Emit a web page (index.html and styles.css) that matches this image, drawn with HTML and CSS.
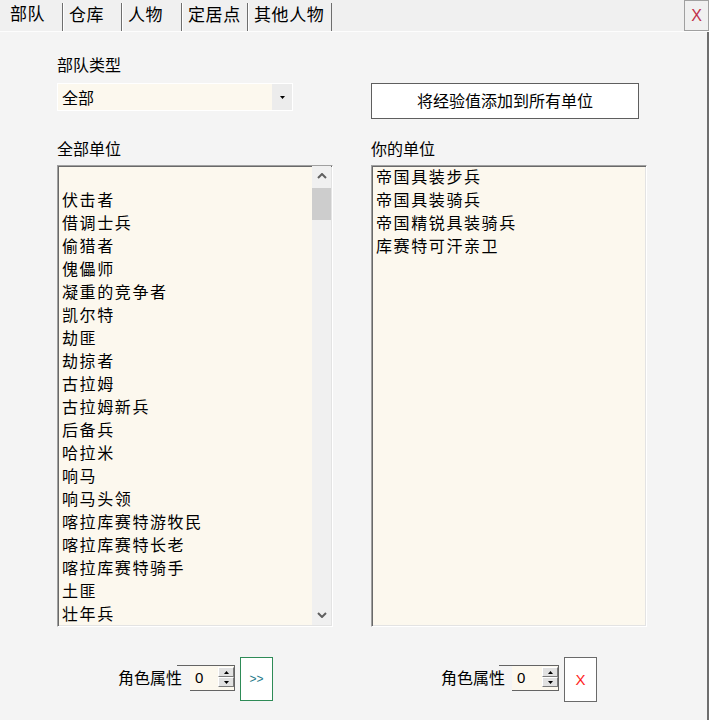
FILE: index.html
```html
<!DOCTYPE html>
<html lang="zh-CN">
<head>
<meta charset="utf-8">
<title>部队</title>
<link rel="stylesheet" href="styles.css">
</head>
<body>
<div class="window">
  <div class="tabbar">
    <div class="tabs">
      <div class="tab active">部队</div>
      <div class="tab">仓库</div>
      <div class="tab">人物</div>
      <div class="tab">定居点</div>
      <div class="tab">其他人物</div>
    </div>
    <div class="close">X</div>
  </div>
  <div class="panel">
    <div class="grid">
      <div class="label">部队类型</div>
      <div></div>

      <div class="select">
        <span class="select-text">全部</span>
        <span class="select-btn"><svg width="5" height="3" viewBox="0 0 5 3"><polygon points="0,0 5,0 2.5,3" fill="#000"/></svg></span>
      </div>
      <button class="wide-btn">将经验值添加到所有单位</button>

      <div class="label list-label">全部单位</div>
      <div class="label list-label">你的单位</div>

      <div class="listbox">
        <div class="items">
          <div class="item">&nbsp;</div>
          <div class="item">伏击者</div>
          <div class="item">借调士兵</div>
          <div class="item">偷猎者</div>
          <div class="item">傀儡师</div>
          <div class="item">凝重的竞争者</div>
          <div class="item">凯尔特</div>
          <div class="item">劫匪</div>
          <div class="item">劫掠者</div>
          <div class="item">古拉姆</div>
          <div class="item">古拉姆新兵</div>
          <div class="item">后备兵</div>
          <div class="item">哈拉米</div>
          <div class="item">响马</div>
          <div class="item">响马头领</div>
          <div class="item">喀拉库赛特游牧民</div>
          <div class="item">喀拉库赛特长老</div>
          <div class="item">喀拉库赛特骑手</div>
          <div class="item">土匪</div>
          <div class="item">壮年兵</div>
        </div>
        <div class="scrollbar">
          <div class="sb-arrow"><svg width="10" height="6" viewBox="0 0 10 6"><polyline points="1,5 5,1 9,5" fill="none" stroke="#606060" stroke-width="2"/></svg></div>
          <div class="sb-thumb"></div>
          <div class="sb-track"></div>
          <div class="sb-arrow"><svg width="10" height="6" viewBox="0 0 10 6"><polyline points="1,1 5,5 9,1" fill="none" stroke="#606060" stroke-width="2"/></svg></div>
        </div>
      </div>
      <div class="listbox">
        <div class="items">
          <div class="item">帝国具装步兵</div>
          <div class="item">帝国具装骑兵</div>
          <div class="item">帝国精锐具装骑兵</div>
          <div class="item">库赛特可汗亲卫</div>
        </div>
      </div>

      <div class="attr">
        <div class="attr-label">角色属性</div>
        <div class="spin">
          <div class="spin-gap"></div>
          <div class="spin-field">
            <div class="spin-value">0</div>
            <div class="spin-btns">
              <div class="spin-btn"><svg width="5" height="3" viewBox="0 0 5 3"><polygon points="0,3 5,3 2.5,0" fill="#000"/></svg></div>
              <div class="spin-btn"><svg width="5" height="3" viewBox="0 0 5 3"><polygon points="0,0 5,0 2.5,3" fill="#000"/></svg></div>
            </div>
          </div>
        </div>
        <div class="go-btn">&gt;&gt;</div>
      </div>
      <div class="attr attr-right">
        <div class="attr-label">角色属性</div>
        <div class="spin spin-wide">
          <div class="spin-gap"></div>
          <div class="spin-field">
            <div class="spin-value">0</div>
            <div class="spin-btns">
              <div class="spin-btn"><svg width="5" height="3" viewBox="0 0 5 3"><polygon points="0,3 5,3 2.5,0" fill="#000"/></svg></div>
              <div class="spin-btn"><svg width="5" height="3" viewBox="0 0 5 3"><polygon points="0,0 5,0 2.5,3" fill="#000"/></svg></div>
            </div>
          </div>
        </div>
        <div class="x-btn">X</div>
      </div>
    </div>
  </div>
</div>
</body>
</html>
```
FILE: styles.css
```css
html, body {
  margin: 0;
  padding: 0;
  background: #f4f4f4;
}

body {
  font-family: "Noto Sans CJK SC", "Noto Sans", sans-serif;
  color: #000;
}

.window {
  width: 709px;
  height: 720px;
  display: flex;
  flex-direction: column;
  background: #f4f4f4;
  overflow: hidden;
}

/* ---------- tab bar ---------- */
.tabbar {
  height: 31px;
  border-bottom: 1px solid #fdfdfd;
  background: #f0f0f0;
  display: flex;
  justify-content: space-between;
}

.tabs {
  display: grid;
  grid-template-columns: 63px 59px 60px 66px 84px;
  padding-top: 3px;
}

.tab {
  font-size: 17px;
  line-height: 22px;
  letter-spacing: 0.6px;
  padding-left: 5px;
  border-left: 1px solid #ffffff;
  border-right: 1px solid #6e6e6e;
  white-space: nowrap;
}

.tab.active {
  padding-left: 10px;
  border-left: none;
  line-height: 20px;
}

.close {
  width: 25px;
  height: 31px;
  box-sizing: border-box;
  border: 1px solid #a0a0a0;
  display: flex;
  align-items: center;
  justify-content: center;
  font-family: "Liberation Sans", sans-serif;
  font-size: 16px;
  color: #c0304a;
}

/* ---------- panel ---------- */
.panel {
  flex: 1;
  border-right: 2px solid #6e6e6e;
  padding: 22px 0 0 57px;
}

.grid {
  display: grid;
  grid-template-columns: 276px 276px;
  column-gap: 38px;
  align-items: start;
}

.label {
  font-size: 16px;
  line-height: 20px;
  height: 20px;
  white-space: nowrap;
}

.list-label {
  margin-top: 19px;
}

.select {
  margin-top: 9px;
  width: 236px;
  height: 28px;
  box-sizing: border-box;
  border: 1px solid #ffffff;
  background: #fcf8ee;
  display: flex;
}

.select-text {
  flex: 1;
  padding-left: 4px;
  font-size: 16px;
  line-height: 26px;
}

.select-btn {
  width: 20px;
  background: #ececec;
  display: flex;
  align-items: center;
  justify-content: center;
}

.wide-btn {
  margin-top: 9px;
  width: 268px;
  height: 36px;
  box-sizing: border-box;
  border: 1px solid #5e5e5e;
  background: #ffffff;
  font-family: inherit;
  font-size: 16px;
  color: #000;
  padding: 0 0 3px 0;
  display: flex;
  align-items: center;
  justify-content: center;
}

/* ---------- list boxes ---------- */
.listbox {
  margin-top: 7px;
  height: 462px;
  box-sizing: border-box;
  border: 1px solid;
  border-color: #a0a0a0 #ffffff #ffffff #a0a0a0;
  box-shadow: inset 1px 1px 0 #696969, inset -1px -1px 0 #e3e3e3;
  padding: 0 1px 1px 1px;
  background: #fcf8ee;
  display: flex;
}

.items {
  flex: 1;
  overflow: hidden;
  margin-top: -1px;
  padding-left: 3px;
  font-size: 16px;
  line-height: 23px;
  letter-spacing: 1.6px;
  white-space: nowrap;
}

.item {
  height: 23px;
}

.scrollbar {
  width: 19px;
  background: #f0f0f0;
  display: flex;
  flex-direction: column;
}

.sb-arrow {
  height: 20px;
  display: flex;
  align-items: center;
  justify-content: center;
}

.sb-thumb {
  margin-top: 2px;
  height: 32px;
  background: #cdcdcd;
}

.sb-track {
  flex: 1;
}

/* ---------- bottom attribute rows ---------- */
.attr {
  margin-top: 30px;
  height: 44px;
  display: flex;
  align-items: flex-start;
  padding-left: 61px;
}

.attr-right {
  padding-left: 70px;
}

.attr-label {
  width: 59px;
  margin-top: 10px;
  font-size: 16px;
  line-height: 20px;
  white-space: nowrap;
}

.attr-right .attr-label {
  width: 58px;
}

.spin {
  width: 58px;
  height: 26px;
  margin-top: 8px;
  box-sizing: border-box;
  border-top: 1px solid #646464;
  display: flex;
}

.spin-wide {
  width: 60px;
}

.spin-gap {
  width: 13px;
}

.spin-field {
  flex: 1;
  display: flex;
  background: #fcf8ee;
  border-bottom: 1px solid #646464;
  border-right: 1px solid #646464;
}

.spin-value {
  flex: 1;
  padding-left: 5px;
  font-family: "Liberation Sans", sans-serif;
  font-size: 15px;
  line-height: 24px;
}

.spin-btns {
  width: 16px;
  padding-top: 1px;
  display: flex;
  flex-direction: column;
}

.spin-btn {
  height: 10px;
  box-sizing: border-box;
  border: 1px solid;
  border-color: #ffffff #7a7a7a #7a7a7a #ffffff;
  background: #e1e1e1;
  display: flex;
  align-items: center;
  justify-content: center;
}

.go-btn {
  margin-left: 5px;
  width: 33px;
  height: 44px;
  box-sizing: border-box;
  border: 1px solid #2e8b57;
  background: #ffffff;
  color: #1d7a88;
  font-family: "Liberation Sans", sans-serif;
  font-size: 12px;
  display: flex;
  align-items: center;
  justify-content: center;
}

.x-btn {
  margin-left: 5px;
  width: 33px;
  height: 45px;
  box-sizing: border-box;
  border: 1px solid #6a6a6a;
  background: #ffffff;
  color: #ff1e1e;
  font-family: "Liberation Sans", sans-serif;
  font-size: 15px;
  display: flex;
  align-items: center;
  justify-content: center;
}
```
